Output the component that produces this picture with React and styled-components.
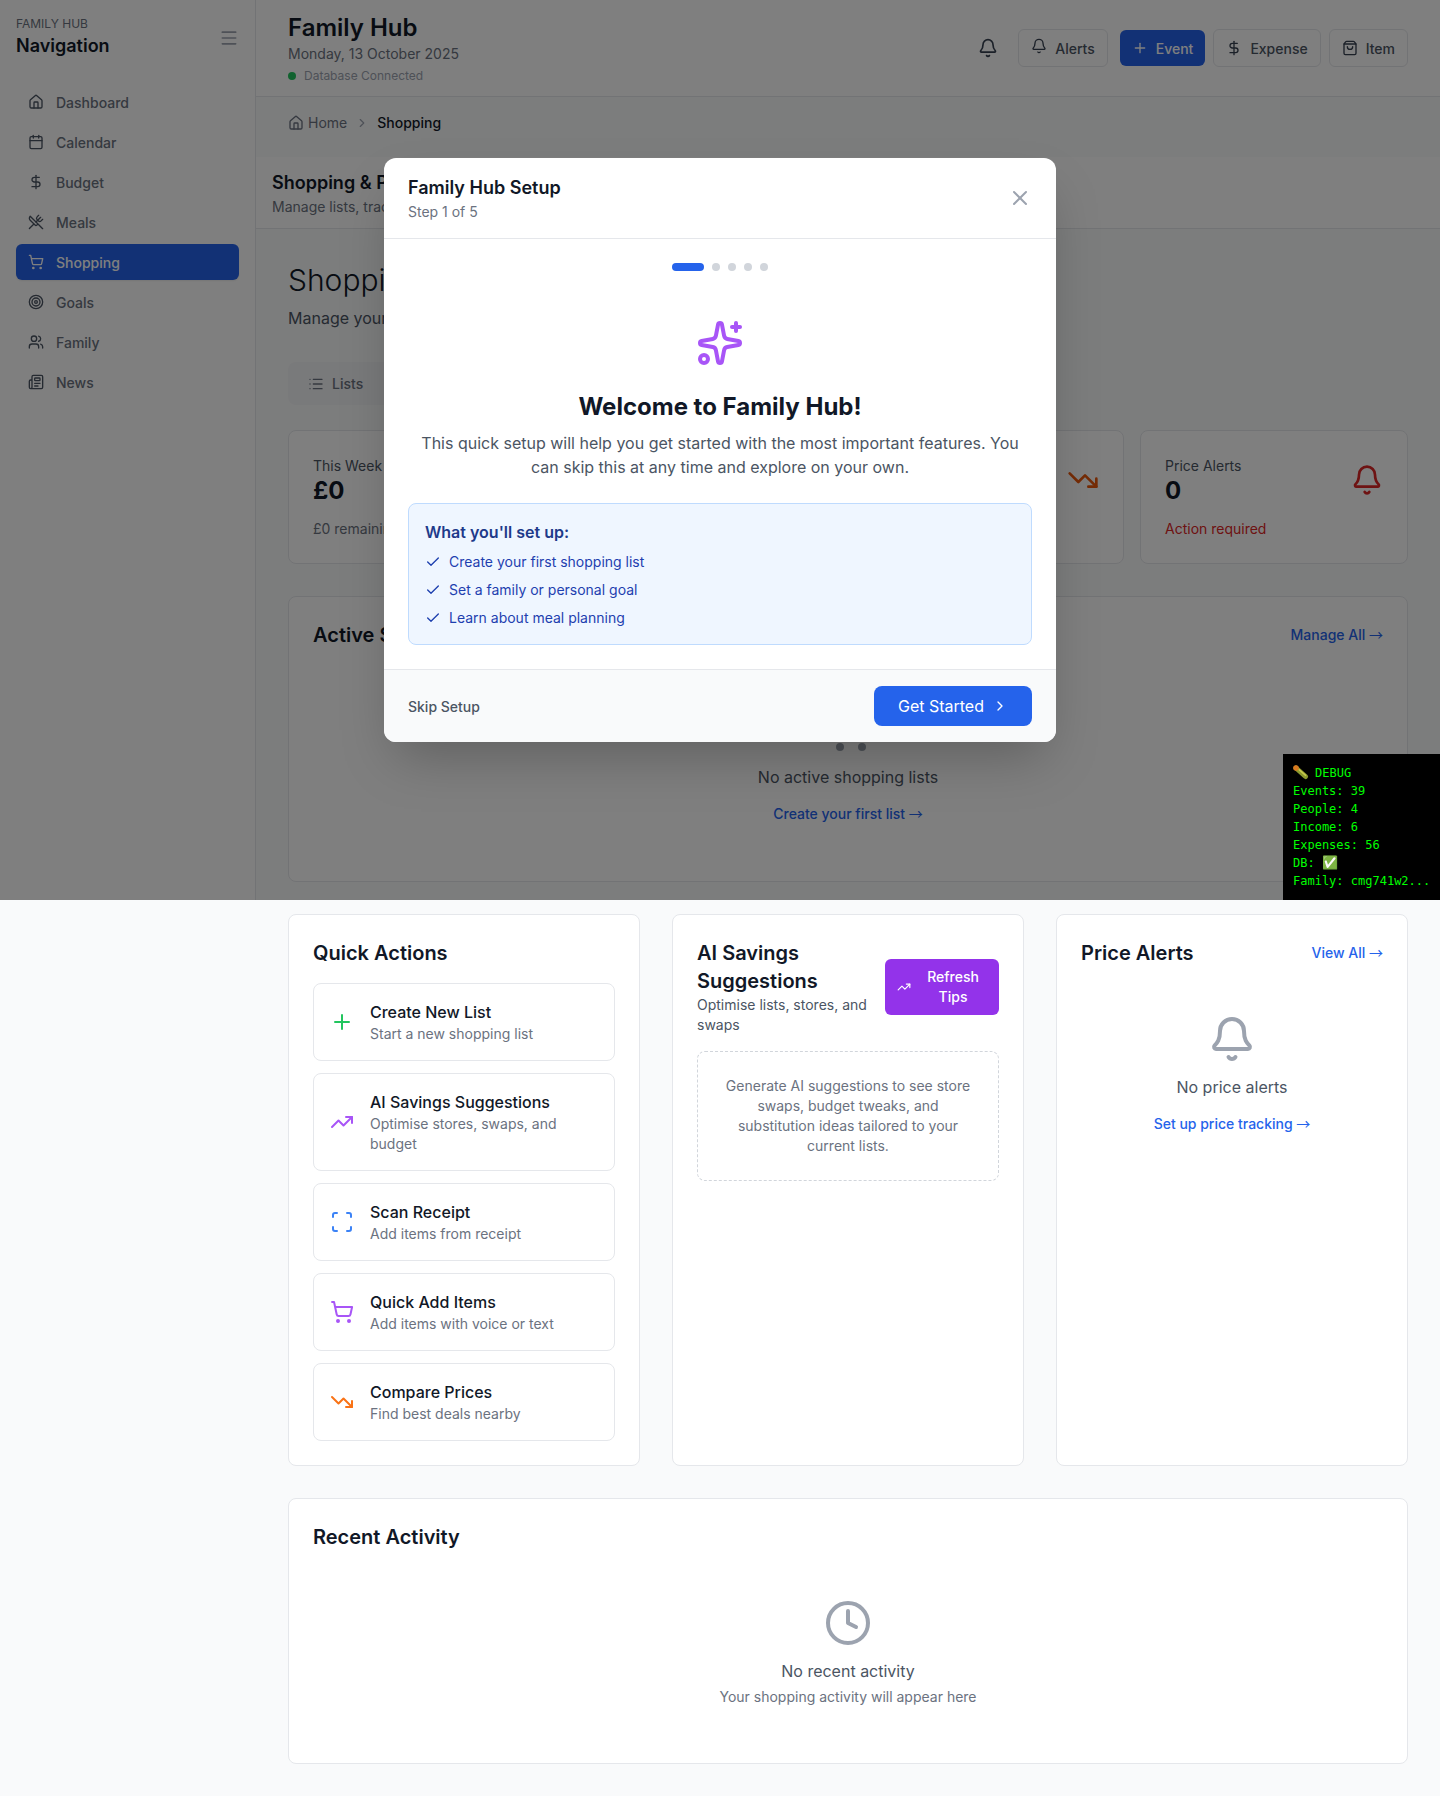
import React from "react";
import styled, { createGlobalStyle } from "styled-components";
import {
  Bell,
  Calendar,
  Check,
  ChevronRight,
  Clock,
  DollarSign,
  Home,
  List,
  Menu,
  Newspaper,
  Plus,
  Scan,
  ShoppingBag,
  ShoppingCart,
  Sparkles,
  Target,
  TrendingDown,
  TrendingUp,
  Users,
  UtensilsCrossed,
  X,
} from "lucide-react";

const GlobalStyle = createGlobalStyle`
  * { box-sizing: border-box; }
  html, body { margin: 0; padding: 0; }
  body {
    background: #f9fafb;
    color: #111827;
    font-family: Inter, "Liberation Sans", sans-serif;
  }
  button { font-family: inherit; cursor: pointer; }
  h1, h2, h3, p { margin: 0; }
`;

const Page = styled.div`
  position: relative;
  display: flex;
  align-items: flex-start;
  width: 1440px;
  min-height: 1796px;
`;

const Sidebar = styled.aside`
  flex: none;
  width: 256px;
  height: 900px;
  background: #fff;
  border-right: 1px solid #e5e7eb;
  padding: 16px;
`;

const SideHead = styled.div`
  display: flex;
  align-items: center;
  justify-content: space-between;
  height: 44px;
  margin-bottom: 24px;
  color: #9ca3af;
`;

const Brand = styled.div`
  font-size: 12px;
  line-height: 16px;
  color: #6b7280;
  strong {
    display: block;
    font-size: 18px;
    line-height: 28px;
    font-weight: 600;
    color: #111827;
  }
`;

const Nav = styled.nav`
  display: flex;
  flex-direction: column;
  gap: 4px;
`;

const NavItem = styled.a`
  display: flex;
  align-items: center;
  gap: 12px;
  height: 36px;
  padding: 0 12px;
  border-radius: 6px;
  font-size: 14px;
  font-weight: 500;
  color: ${(p) => (p.$active ? "#fff" : "#6b7280")};
  background: ${(p) => (p.$active ? "#2563eb" : "transparent")};
  box-shadow: ${(p) => (p.$active ? "0 1px 2px rgba(0,0,0,.08)" : "none")};
  svg {
    color: ${(p) => (p.$active ? "#fff" : "#4b5563")};
  }
`;

const Main = styled.main`
  flex: 1;
  min-width: 0;
`;

const Header = styled.header`
  display: flex;
  align-items: center;
  justify-content: space-between;
  height: 97px;
  padding: 0 32px;
  background: #fff;
  border-bottom: 1px solid #e5e7eb;
`;

const AppTitle = styled.h1`
  font-size: 24px;
  line-height: 32px;
  font-weight: 600;
`;

const DateLine = styled.p`
  font-size: 14px;
  line-height: 20px;
  color: #6b7280;
`;

const Status = styled.div`
  display: flex;
  align-items: center;
  gap: 8px;
  margin-top: 4px;
  font-size: 12px;
  line-height: 16px;
  color: #9ca3af;
  i {
    width: 8px;
    height: 8px;
    border-radius: 50%;
    background: #22c55e;
  }
`;

const HeaderActions = styled.div`
  display: flex;
  align-items: center;
  gap: 12px;
`;

const IconButton = styled.button`
  display: flex;
  padding: 8px;
  border: 0;
  background: none;
  color: #374151;
`;

const ButtonGroup = styled.div`
  display: flex;
  align-items: center;
  gap: 8px;
`;

const HeadButton = styled.button`
  display: flex;
  align-items: center;
  gap: 8px;
  height: ${(p) => (p.$primary ? "36px" : "38px")};
  padding: 0 12px;
  border-radius: 6px;
  border: ${(p) => (p.$primary ? "0" : "1px solid #e5e7eb")};
  background: ${(p) => (p.$primary ? "#2563eb" : "#fff")};
  color: ${(p) => (p.$primary ? "#fff" : "#4b5563")};
  font-size: 14px;
  font-weight: 500;
  svg {
    color: ${(p) => (p.$primary ? "#fff" : "#374151")};
  }
`;

const RaisedBell = styled(Bell)`
  margin-top: -4px;
`;

const Crumbs = styled.div`
  display: flex;
  align-items: center;
  gap: 8px;
  padding: 16px 32px 24px;
  font-size: 14px;
  line-height: 20px;
  color: #6b7280;
  span {
    display: flex;
    align-items: center;
    gap: 4px;
  }
  b {
    font-weight: 500;
    color: #111827;
  }
`;

const SubHead = styled.div`
  padding: 14px 16px 11px;
  background: #fff;
  border-bottom: 1px solid #e5e7eb;
  h2 {
    font-size: 18px;
    line-height: 24px;
    font-weight: 600;
  }
  p {
    margin-top: 2px;
    font-size: 14px;
    line-height: 20px;
    color: #6b7280;
  }
`;

const Content = styled.div`
  display: flex;
  flex-direction: column;
  padding: 33px 32px 32px;
`;

const PageTitle = styled.h1`
  font-size: 30px;
  line-height: 36px;
  font-weight: 300;
`;

const PageSub = styled.p`
  margin-top: 8px;
  font-size: 16px;
  line-height: 24px;
  color: #4b5563;
`;

const Tabs = styled.div`
  display: flex;
  width: 640px;
  margin: 32px 0 25px;
  padding: 4px;
  background: #f3f4f6;
  border-radius: 8px;
`;

const Tab = styled.div`
  display: flex;
  align-items: center;
  gap: 8px;
  height: 35px;
  padding: 0 16px;
  border-radius: 6px;
  font-size: 14px;
  font-weight: 500;
  color: #6b7280;
`;

const Stats = styled.div`
  display: grid;
  grid-template-columns: repeat(4, 1fr);
  gap: 16px;
  margin-bottom: 32px;
`;

const Card = styled.section`
  background: #fff;
  border: 1px solid #e5e7eb;
  border-radius: 8px;
  padding: 24px;
`;

const StatCard = styled(Card)`
  display: flex;
  align-items: flex-start;
  justify-content: space-between;
  height: 134px;
  padding-top: 25px;
`;

const StatLabel = styled.p`
  font-size: 14px;
  line-height: 20px;
  color: #4b5563;
`;

const StatValue = styled.p`
  font-size: 24px;
  line-height: 30px;
  font-weight: 700;
`;

const StatNote = styled.p`
  margin-top: 13px;
  font-size: 14px;
  line-height: 20px;
  color: ${(p) => p.$color || "#6b7280"};
`;

const StatIcon = styled.div`
  display: flex;
  margin-top: 8px;
  color: ${(p) => p.$color};
`;

const TitleRow = styled.div`
  display: flex;
  align-items: center;
  justify-content: space-between;
`;

const CardTitle = styled.h3`
  font-size: 20px;
  line-height: 28px;
  font-weight: 600;
  color: #111827;
`;

const BlueLink = styled.a`
  font-size: 14px;
  line-height: 20px;
  font-weight: 500;
  color: #2563eb;
  span {
    font-family: "Noto Sans CJK SC", sans-serif;
    font-weight: 400;
    line-height: 1;
  }
`;

const Empty = styled.div`
  display: flex;
  flex-direction: column;
  align-items: center;
  padding-top: ${(p) => p.$top}px;
  color: #9ca3af;
`;

const EmptyTitle = styled.p`
  margin: 12px 0 15px;
  font-size: 16px;
  line-height: 24px;
  color: #4b5563;
`;

const EmptyHint = styled.p`
  margin-top: -11px;
  font-size: 14px;
  line-height: 20px;
  color: #6b7280;
`;

const ActiveCard = styled(Card)`
  height: 286px;
  margin-bottom: 32px;
`;

const Columns = styled.div`
  display: grid;
  grid-template-columns: repeat(3, 1fr);
  gap: 32px;
  margin-bottom: 32px;
`;

const ActionList = styled.div`
  display: flex;
  flex-direction: column;
  gap: 12px;
  margin-top: 16px;
`;

const ActionRow = styled.div`
  display: flex;
  align-items: center;
  gap: 16px;
  padding: 16px;
  background: #fff;
  border: 1px solid #e5e7eb;
  border-radius: 8px;
  svg {
    flex: none;
    color: ${(p) => p.$color};
  }
  strong {
    display: block;
    font-size: 16px;
    line-height: 24px;
    font-weight: 500;
    color: #111827;
  }
  span {
    display: block;
    font-size: 14px;
    line-height: 20px;
    color: #6b7280;
  }
`;

const TipsHead = styled.div`
  display: flex;
  align-items: center;
  justify-content: space-between;
  gap: 16px;
  p {
    font-size: 14px;
    line-height: 20px;
    color: #4b5563;
  }
`;

const RefreshButton = styled.button`
  flex: none;
  display: flex;
  align-items: center;
  gap: 8px;
  width: 114px;
  height: 56px;
  padding: 0 12px;
  border: 0;
  border-radius: 6px;
  background: #9333ea;
  color: #fff;
  font-size: 14px;
  line-height: 20px;
  font-weight: 500;
  svg {
    flex: none;
  }
`;

const TipsEmpty = styled.div`
  margin-top: 16px;
  padding: 24px;
  border: 1px dashed #d1d5db;
  border-radius: 8px;
  font-size: 14px;
  line-height: 20px;
  text-align: center;
  color: #6b7280;
`;

const RecentCard = styled(Card)`
  height: 266px;
`;

/* modal sits on the first viewport only, the rest of the page stays undimmed */
const Overlay = styled.div`
  position: absolute;
  top: 0;
  left: 0;
  right: 0;
  height: 900px;
  display: flex;
  align-items: center;
  justify-content: center;
  background: rgba(0, 0, 0, 0.5);
`;

const Modal = styled.div`
  width: 672px;
  background: #fff;
  border-radius: 12px;
  overflow: hidden;
  box-shadow: 0 25px 50px -12px rgba(0, 0, 0, 0.25);
`;

const ModalHead = styled.div`
  display: flex;
  align-items: center;
  justify-content: space-between;
  padding: 16px 24px;
  border-bottom: 1px solid #e5e7eb;
  color: #9ca3af;
  h2 {
    font-size: 18px;
    line-height: 28px;
    font-weight: 600;
    color: #111827;
  }
  p {
    font-size: 14px;
    line-height: 20px;
    color: #6b7280;
  }
`;

const ModalBody = styled.div`
  padding: 24px;
`;

const Steps = styled.div`
  display: flex;
  justify-content: center;
  gap: 8px;
  margin-bottom: 48px;
`;

const Step = styled.i`
  width: ${(p) => (p.$on ? "32px" : "8px")};
  height: 8px;
  border-radius: 4px;
  background: ${(p) => (p.$on ? "#2563eb" : "#d1d5db")};
`;

const Welcome = styled.div`
  display: flex;
  flex-direction: column;
  align-items: center;
  text-align: center;
  svg {
    color: #a855f7;
  }
  h2 {
    margin-top: 24px;
    font-size: 24px;
    line-height: 32px;
    font-weight: 700;
    color: #111827;
  }
  p {
    margin-top: 8px;
    font-size: 16px;
    line-height: 24px;
    color: #4b5563;
  }
`;

const SetupBox = styled.div`
  margin-top: 24px;
  padding: 16px;
  background: #eff6ff;
  border: 1px solid #bfdbfe;
  border-radius: 8px;
  h3 {
    font-size: 16px;
    line-height: 24px;
    font-weight: 600;
    color: #1e3a8a;
  }
`;

const SetupList = styled.div`
  display: flex;
  flex-direction: column;
  gap: 8px;
  margin-top: 8px;
`;

const SetupItem = styled.div`
  display: flex;
  align-items: center;
  gap: 8px;
  font-size: 14px;
  line-height: 20px;
  color: #1e40af;
`;

const ModalFoot = styled.div`
  display: flex;
  align-items: center;
  justify-content: space-between;
  padding: 16px 24px;
  background: #f9fafb;
  border-top: 1px solid #e5e7eb;
`;

const SkipButton = styled.button`
  padding: 0;
  border: 0;
  background: none;
  font-size: 14px;
  font-weight: 500;
  color: #4b5563;
`;

const NextButton = styled.button`
  display: flex;
  align-items: center;
  gap: 8px;
  height: 40px;
  padding: 0 24px;
  border: 0;
  border-radius: 8px;
  background: #2563eb;
  color: #fff;
  font-size: 16px;
  font-weight: 400;
`;

const Debug = styled.div`
  position: absolute;
  right: 0;
  bottom: 0;
  width: 157px;
  height: 146px;
  padding: 10px;
  background: #000;
  color: #0f0;
  font-family: "DejaVu Sans Mono", monospace;
  font-size: 12px;
  line-height: 18px;
  white-space: nowrap;
`;

const DebugLine = styled.div`
  height: 18px;
`;

const DebugTitle = styled(DebugLine)`
  display: flex;
  align-items: center;
  gap: 6px;
`;

const DebugEmoji = styled.span`
  font-size: 13px;
  line-height: 18px;
`;

const BugIcon = () => (
  <svg width="16" height="16" viewBox="0 0 16 16" aria-hidden="true">
    <path d="M3 3 L12.5 11.5" stroke="#8c9a2e" strokeWidth="5" strokeLinecap="round" />
    <path d="M6 4.6 L12.6 10.4" stroke="#c9c94e" strokeWidth="1.4" strokeLinecap="round" />
    <circle cx="3" cy="3" r="2.8" fill="#d9791f" />
  </svg>
);

const navItems = [
  ["Dashboard", Home],
  ["Calendar", Calendar],
  ["Budget", DollarSign],
  ["Meals", UtensilsCrossed],
  ["Shopping", ShoppingCart],
  ["Goals", Target],
  ["Family", Users],
  ["News", Newspaper],
];

const actions = [
  ["Create New List", "Start a new shopping list", Plus, "#22c55e"],
  ["AI Savings Suggestions", "Optimise stores, swaps, and budget", TrendingUp, "#a855f7"],
  ["Scan Receipt", "Add items from receipt", Scan, "#3b82f6"],
  ["Quick Add Items", "Add items with voice or text", ShoppingCart, "#a855f7"],
  ["Compare Prices", "Find best deals nearby", TrendingDown, "#f97316"],
];

const setup = [
  "Create your first shopping list",
  "Set a family or personal goal",
  "Learn about meal planning",
];

const Arrow = () => <span>→</span>;

export default function App() {
  return (
    <>
      <GlobalStyle />
      <Page>
        <Sidebar>
          <SideHead>
            <Brand>
              FAMILY HUB
              <strong>Navigation</strong>
            </Brand>
            <Menu size={20} />
          </SideHead>
          <Nav>
            {navItems.map(([label, Icon]) => (
              <NavItem key={label} $active={label === "Shopping"}>
                <Icon size={16} />
                {label}
              </NavItem>
            ))}
          </Nav>
        </Sidebar>

        <Main>
          <Header>
            <div>
              <AppTitle>Family Hub</AppTitle>
              <DateLine>Monday, 13 October 2025</DateLine>
              <Status>
                <i />
                Database Connected
              </Status>
            </div>
            <HeaderActions>
              <IconButton>
                <Bell size={20} />
              </IconButton>
              <HeadButton>
                <RaisedBell size={16} />
                Alerts
              </HeadButton>
              <ButtonGroup>
                <HeadButton $primary>
                  <Plus size={16} />
                  Event
                </HeadButton>
                <HeadButton>
                  <DollarSign size={16} />
                  Expense
                </HeadButton>
                <HeadButton>
                  <ShoppingBag size={16} />
                  Item
                </HeadButton>
              </ButtonGroup>
            </HeaderActions>
          </Header>

          <Crumbs>
            <span>
              <Home size={16} />
              Home
            </span>
            <ChevronRight size={14} color="#9ca3af" />
            <b>Shopping</b>
          </Crumbs>

          <SubHead>
            <h2>Shopping &amp; Price Tracking</h2>
            <p>Manage lists, track prices and save money</p>
          </SubHead>

          <Content>
            <PageTitle>Shopping</PageTitle>
            <PageSub>Manage your shopping lists and track prices</PageSub>

            <Tabs>
              <Tab>
                <List size={16} />
                Lists
              </Tab>
            </Tabs>

            <Stats>
              <StatCard>
                <div>
                  <StatLabel>This Week</StatLabel>
                  <StatValue>£0</StatValue>
                  <StatNote>£0 remaining</StatNote>
                </div>
              </StatCard>
              <StatCard>
                <div>
                  <StatLabel>Active Lists</StatLabel>
                  <StatValue>0</StatValue>
                  <StatNote>0 items</StatNote>
                </div>
              </StatCard>
              <StatCard>
                <div>
                  <StatLabel>Savings</StatLabel>
                  <StatValue>£0</StatValue>
                  <StatNote>This month</StatNote>
                </div>
                <StatIcon $color="#ea580c">
                  <TrendingDown size={32} />
                </StatIcon>
              </StatCard>
              <StatCard>
                <div>
                  <StatLabel>Price Alerts</StatLabel>
                  <StatValue>0</StatValue>
                  <StatNote $color="#dc2626">Action required</StatNote>
                </div>
                <StatIcon $color="#dc2626">
                  <Bell size={32} />
                </StatIcon>
              </StatCard>
            </Stats>

            <ActiveCard>
              <TitleRow>
                <CardTitle>Active Shopping Lists</CardTitle>
                <BlueLink>
                  Manage All <Arrow />
                </BlueLink>
              </TitleRow>
              <Empty $top={56}>
                <ShoppingCart size={48} />
                <EmptyTitle>No active shopping lists</EmptyTitle>
                <BlueLink>
                  Create your first list <Arrow />
                </BlueLink>
              </Empty>
            </ActiveCard>

            <Columns>
              <Card>
                <CardTitle>Quick Actions</CardTitle>
                <ActionList>
                  {actions.map(([title, desc, Icon, color]) => (
                    <ActionRow key={title} $color={color}>
                      <Icon size={24} />
                      <div>
                        <strong>{title}</strong>
                        <span>{desc}</span>
                      </div>
                    </ActionRow>
                  ))}
                </ActionList>
              </Card>

              <Card>
                <TipsHead>
                  <div>
                    <CardTitle>AI Savings Suggestions</CardTitle>
                    <p>Optimise lists, stores, and swaps</p>
                  </div>
                  <RefreshButton>
                    <TrendingUp size={14} />
                    Refresh Tips
                  </RefreshButton>
                </TipsHead>
                <TipsEmpty>
                  Generate AI suggestions to see store swaps, budget tweaks, and substitution ideas
                  tailored to your current lists.
                </TipsEmpty>
              </Card>

              <Card>
                <TitleRow>
                  <CardTitle>Price Alerts</CardTitle>
                  <BlueLink>
                    View All <Arrow />
                  </BlueLink>
                </TitleRow>
                <Empty $top={48}>
                  <Bell size={48} />
                  <EmptyTitle>No price alerts</EmptyTitle>
                  <BlueLink>
                    Set up price tracking <Arrow />
                  </BlueLink>
                </Empty>
              </Card>
            </Columns>

            <RecentCard>
              <CardTitle>Recent Activity</CardTitle>
              <Empty $top={48}>
                <Clock size={48} />
                <EmptyTitle>No recent activity</EmptyTitle>
                <EmptyHint>Your shopping activity will appear here</EmptyHint>
              </Empty>
            </RecentCard>
          </Content>
        </Main>

        <Overlay>
          <Modal>
            <ModalHead>
              <div>
                <h2>Family Hub Setup</h2>
                <p>Step 1 of 5</p>
              </div>
              <X size={24} />
            </ModalHead>
            <ModalBody>
              <Steps>
                {[0, 1, 2, 3, 4].map((i) => (
                  <Step key={i} $on={i === 0} />
                ))}
              </Steps>
              <Welcome>
                <Sparkles size={48} />
                <h2>Welcome to Family Hub!</h2>
                <p>
                  This quick setup will help you get started with the most important features. You
                  can skip this at any time and explore on your own.
                </p>
              </Welcome>
              <SetupBox>
                <h3>What you'll set up:</h3>
                <SetupList>
                  {setup.map((text) => (
                    <SetupItem key={text}>
                      <Check size={16} />
                      {text}
                    </SetupItem>
                  ))}
                </SetupList>
              </SetupBox>
            </ModalBody>
            <ModalFoot>
              <SkipButton>Skip Setup</SkipButton>
              <NextButton>
                Get Started
                <ChevronRight size={16} />
              </NextButton>
            </ModalFoot>
          </Modal>
          <Debug>
            <DebugTitle>
              <BugIcon />
              DEBUG
            </DebugTitle>
            <DebugLine>Events: 39</DebugLine>
            <DebugLine>People: 4</DebugLine>
            <DebugLine>Income: 6</DebugLine>
            <DebugLine>Expenses: 56</DebugLine>
            <DebugLine>
              DB: <DebugEmoji>✅</DebugEmoji>
            </DebugLine>
            <DebugLine>Family: cmg741w2...</DebugLine>
          </Debug>
        </Overlay>
      </Page>
    </>
  );
}
